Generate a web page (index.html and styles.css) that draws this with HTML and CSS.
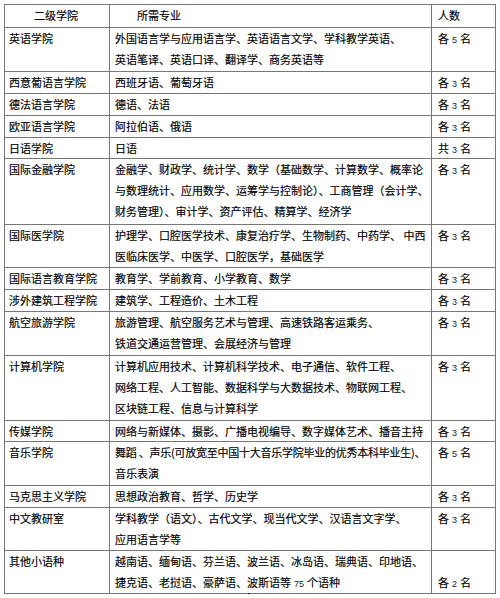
FILE: index.html
```html
<!DOCTYPE html>
<html lang="zh-CN">
<head>
<meta charset="utf-8">
<link rel="stylesheet" href="styles.css">
</head>
<body>
<div class="page">
<div class="grid">
  <div class="cell center">二级学院</div><div class="cell mid indent">所需专业</div><div class="cell last">人数</div>
  <div class="cell">英语学院</div><div class="cell mid">外国语言学与应用语言学、英语语言文学、学科教学英语、<br>英语笔译、英语口译、翻译学、商务英语等</div><div class="cell last">各<span class="num">5</span>名</div>
  <div class="cell">西意葡语言学院</div><div class="cell mid">西班牙语、葡萄牙语</div><div class="cell last">各<span class="num">3</span>名</div>
  <div class="cell">德法语言学院</div><div class="cell mid">德语、法语</div><div class="cell last">各<span class="num">3</span>名</div>
  <div class="cell">欧亚语言学院</div><div class="cell mid">阿拉伯语、俄语</div><div class="cell last">各<span class="num">3</span>名</div>
  <div class="cell">日语学院</div><div class="cell mid">日语</div><div class="cell last">共<span class="num">3</span>名</div>
  <div class="cell">国际金融学院</div><div class="cell mid">金融学、财政学、统计学、数学（基础数学、计算数学、概率论<br>与数理统计、应用数学、运筹学与控制论）、工商管理（会计学、<br>财务管理）、审计学、资产评估、精算学、经济学</div><div class="cell last">各<span class="num">3</span>名</div>
  <div class="cell">国际医学院</div><div class="cell mid">护理学、口腔医学技术、康复治疗学、生物制药、中药学、 中西<br>医临床医学、中医学、口腔医学，基础医学</div><div class="cell last">各<span class="num">3</span>名</div>
  <div class="cell">国际语言教育学院</div><div class="cell mid">教育学、学前教育、小学教育、数学</div><div class="cell last">各<span class="num">3</span>名</div>
  <div class="cell">涉外建筑工程学院</div><div class="cell mid">建筑学、工程造价、土木工程</div><div class="cell last">各<span class="num">3</span>名</div>
  <div class="cell">航空旅游学院</div><div class="cell mid">旅游管理、航空服务艺术与管理、高速铁路客运乘务、<br>铁道交通运营管理、会展经济与管理</div><div class="cell last">各<span class="num">3</span>名</div>
  <div class="cell">计算机学院</div><div class="cell mid">计算机应用技术、计算机科学技术、电子通信、软件工程、<br>网络工程、人工智能、数据科学与大数据技术、物联网工程、<br>区块链工程、信息与计算科学</div><div class="cell last">各<span class="num">3</span>名</div>
  <div class="cell">传媒学院</div><div class="cell mid">网络与新媒体、摄影、广播电视编导、数字媒体艺术、播音主持</div><div class="cell last">各<span class="num">3</span>名</div>
  <div class="cell">音乐学院</div><div class="cell mid"><span class="squeeze">舞蹈 、声乐(可放宽至中国十大音乐学院毕业的优秀本科毕业生)、</span><br>音乐表演</div><div class="cell last">各<span class="num">5</span>名</div>
  <div class="cell">马克思主义学院</div><div class="cell mid">思想政治教育、哲学、历史学</div><div class="cell last">各<span class="num">3</span>名</div>
  <div class="cell">中文教研室</div><div class="cell mid">学科教学（语文）、古代文学、现当代文学、汉语言文字学、<br>应用语言学等</div><div class="cell last">各<span class="num">3</span>名</div>
  <div class="cell">其他小语种</div><div class="cell mid">越南语、缅甸语、芬兰语、波兰语、冰岛语、瑞典语、印地语、<br>捷克语、老挝语、豪萨语、波斯语等<span class="num">75</span>个语种</div><div class="cell last bottom"><span>各<span class="num">2</span>名</span></div>
</div>
<span class="mark"></span>
</div>
</body>
</html>
```
FILE: styles.css
```css
html, body {
  margin: 0;
  padding: 0;
  background: #ffffff;
}
.page {
  position: relative;
  padding: 4px 0 0 4px;
}
.grid {
  display: grid;
  width: max-content;
  grid-template-columns: 104px 321px 63px;
  grid-template-rows: 22px 43px 21px 21px 21px 20px 65px 42px 21px 21px 43px 64px 20px 43px 21px 42px 42px;
  gap: 1px;
  padding: 1px;
  background: #777777;
  font-family: "Noto Sans CJK SC", "Noto Sans", sans-serif;
  font-size: 11px;
  color: #000000;
  -webkit-text-stroke: 0.15px #000000;
}
.cell {
  background: #ffffff;
  line-height: 21px;
  padding: 0 2px 0 4px;
  white-space: nowrap;
  overflow: hidden;
}
.mid { padding-left: 5px; }
.last { padding-left: 6px; }
.center { text-align: center; padding-left: 0; }
.indent { padding-left: 27px; }
.bottom {
  display: flex;
  align-items: flex-end;
}
.num {
  font-family: "Liberation Sans", Arial, sans-serif;
  font-size: 9px;
  line-height: 1;
  margin: 0 3px;
  color: #222222;
  -webkit-text-stroke: 0;
}
.squeeze { letter-spacing: -0.25px; }
.mark {
  position: absolute;
  left: 248px;
  top: 593px;
  width: 2px;
  height: 4px;
  background: #111111;
}
```
